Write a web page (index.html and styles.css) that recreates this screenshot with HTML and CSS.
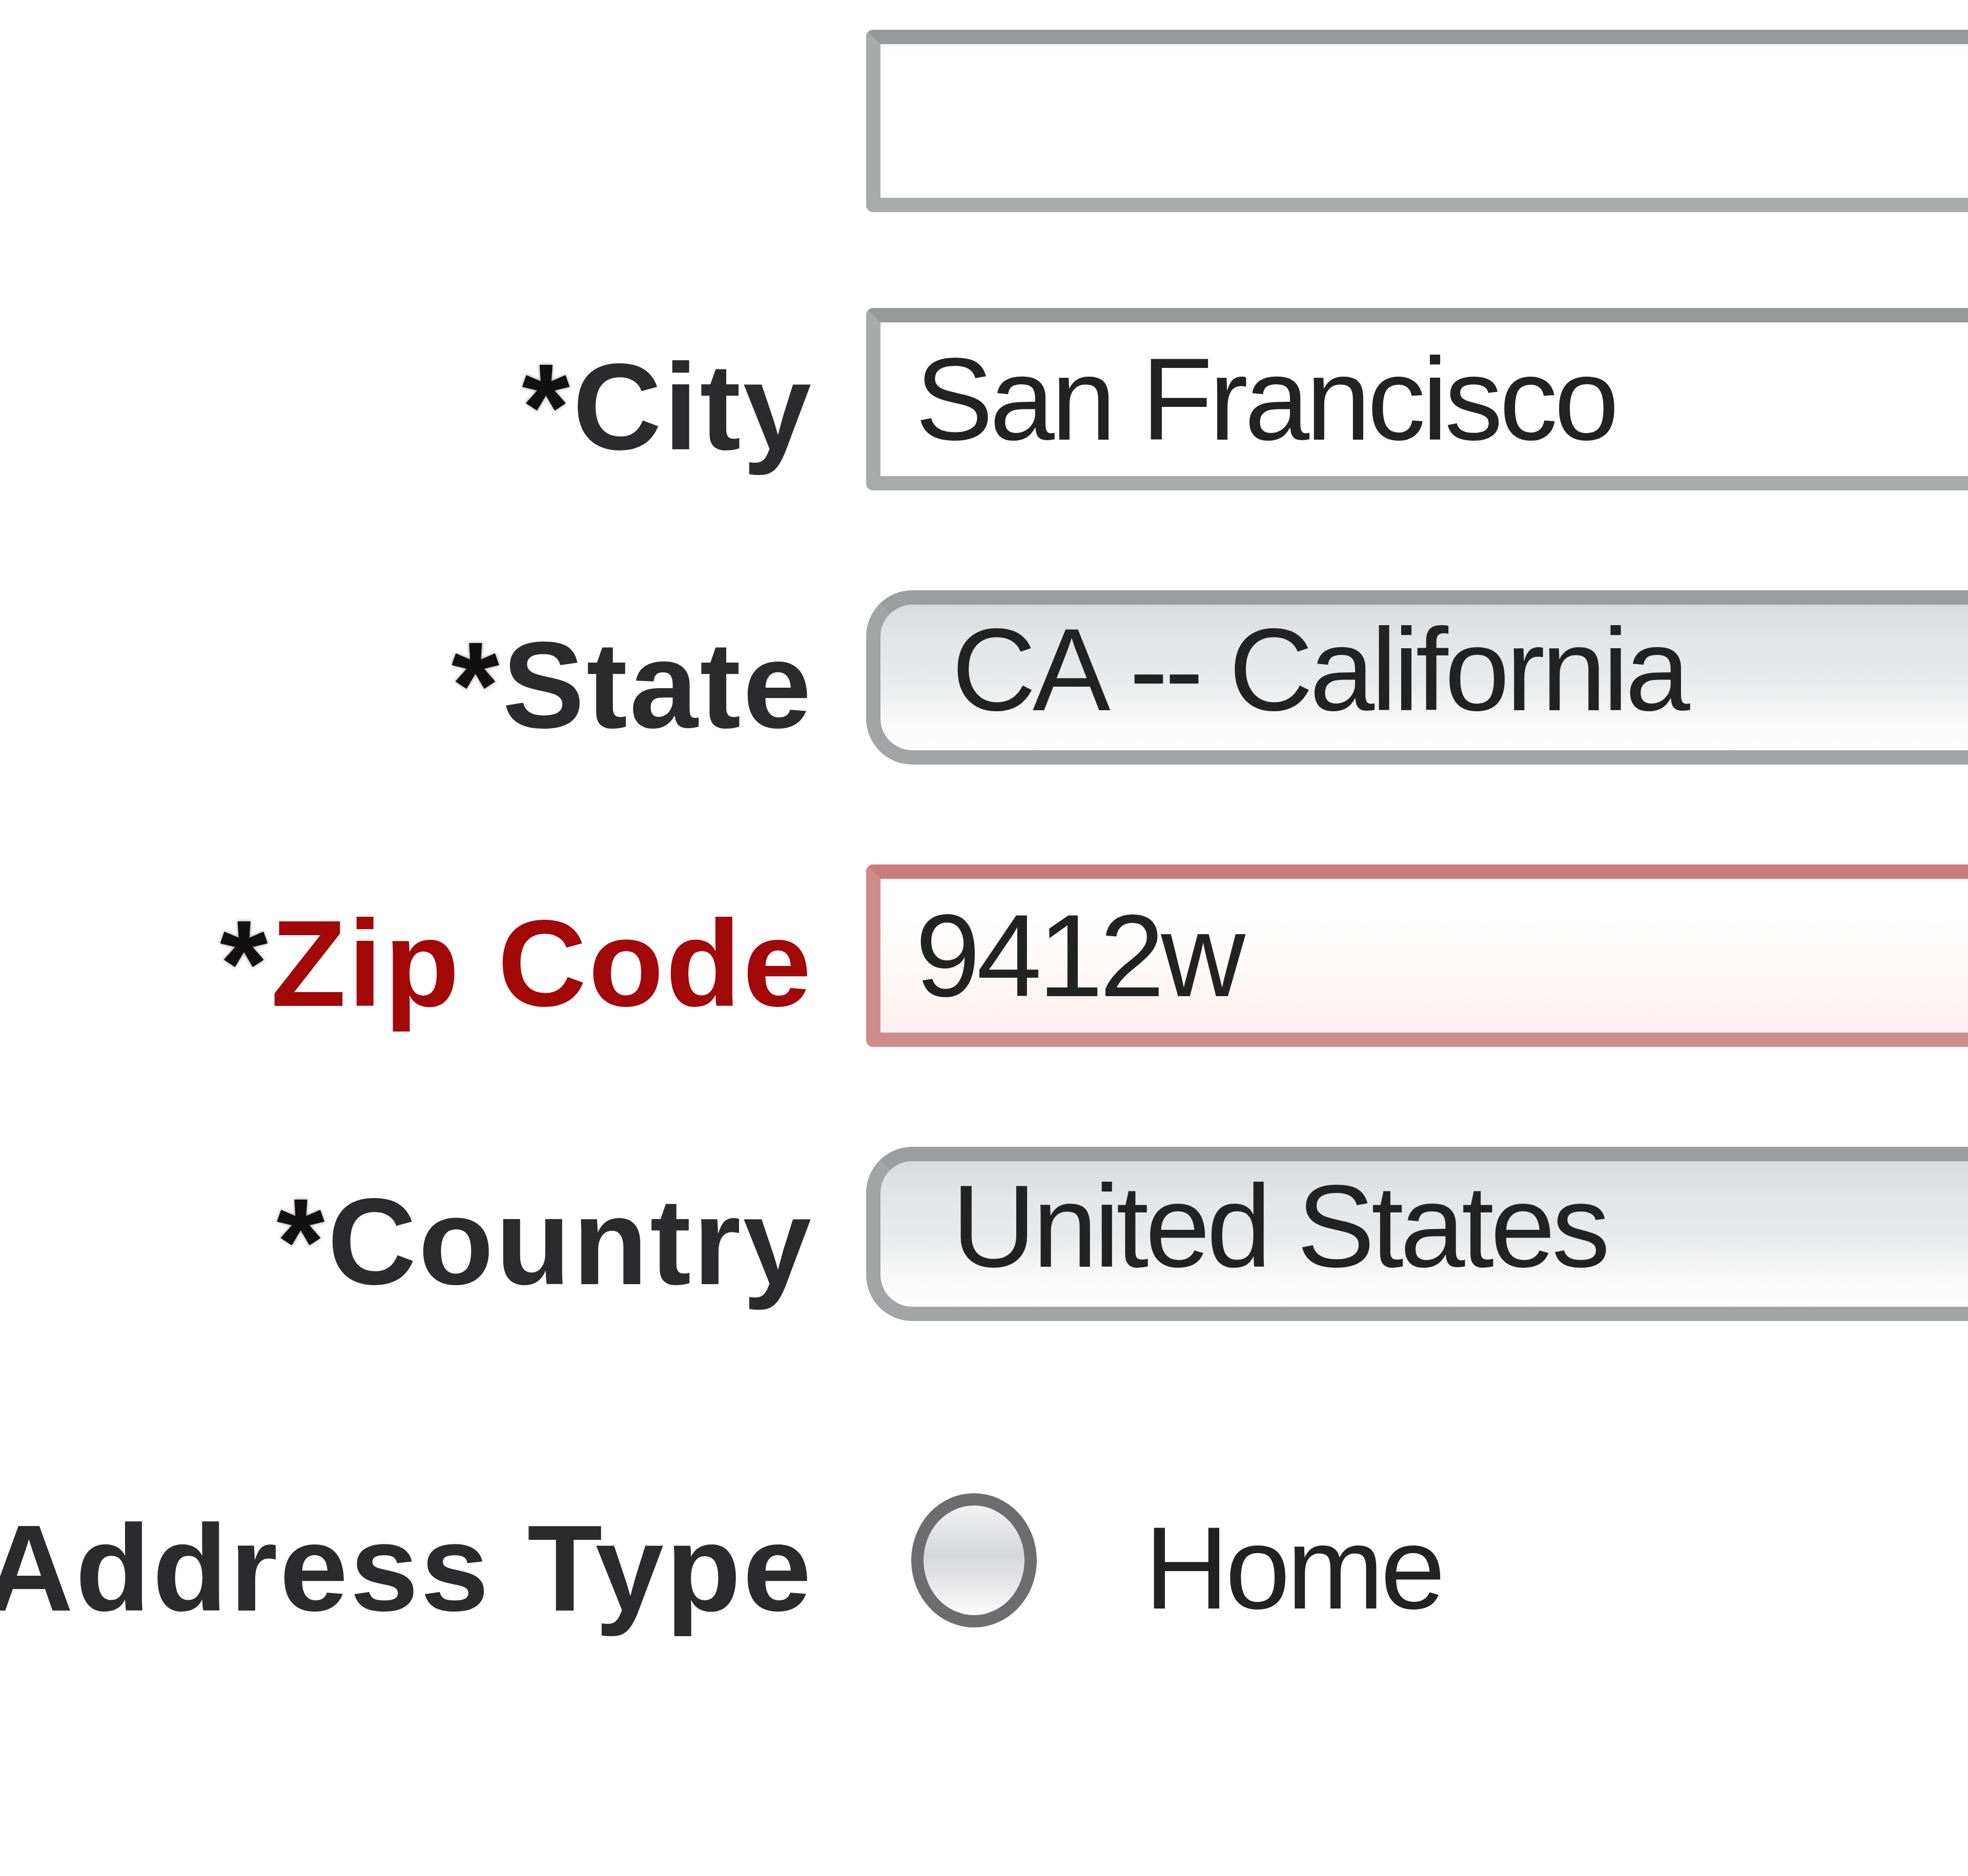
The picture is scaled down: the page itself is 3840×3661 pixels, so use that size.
FILE: index.html
```html
<!DOCTYPE html>
<html lang="en">
<head>
<meta charset="utf-8">
<title>Address form</title>
<link rel="stylesheet" href="styles.css">
</head>
<body>
<form class="form">
  <div class="label"></div>
  <div class="field"><input class="text" type="text" value=""></div>

  <div class="label"><span class="req">*</span>City</div>
  <div class="field"><input class="text" type="text" value="San Francisco"></div>

  <div class="label"><span class="req">*</span>State</div>
  <div class="field"><select class="popup"><option>CA -- California</option></select></div>

  <div class="label error"><span class="req">*</span>Zip Code</div>
  <div class="field"><input class="text text-error" type="text" value="9412w"></div>

  <div class="label"><span class="req">*</span>Country</div>
  <div class="field"><select class="popup"><option>United States</option></select></div>

  <div class="label label-radio">Address Type</div>
  <div class="field field-radio">
    <span class="radio"></span>
    <span class="radio-text">Home</span>
  </div>
</form>
</body>
</html>
```

FILE: styles.css
```css
html, body {
  margin: 0;
  padding: 0;
  background: #ffffff;
  overflow: hidden;
}

body {
  width: 3840px;
  height: 3661px;
}

.form {
  display: grid;
  grid-template-columns: 1587px 2400px;
  column-gap: 103px;
  row-gap: 187px;
  padding-top: 58px;
  align-items: center;
}

.label {
  display: flex;
  justify-content: flex-end;
  align-items: center;
  white-space: nowrap;
  font-family: "Liberation Sans", Arial, sans-serif;
  font-weight: bold;
  font-size: 240px;
  letter-spacing: 4px;
  color: #2b2b2e;
  line-height: 1;
  padding-top: 30px;
}

.label.error {
  color: #a30808;
}

.req {
  color: #111111;
  margin-right: 2px;
  text-shadow: 0 0 6px rgba(40, 0, 0, 0.5);
}

.field {
  display: flex;
  align-items: center;
  height: 356px;
}

.text,
.popup {
  -webkit-appearance: none;
  appearance: none;
  box-sizing: border-box;
  width: 2400px;
  margin: 0;
  font-family: "Liberation Sans", Arial, sans-serif;
  font-size: 228px;
  letter-spacing: -7px;
  color: #222222;
  outline: none;
}

.text {
  height: 356px;
  padding: 0 0 0 68px;
  border: 28px solid #a9aaac;
  border-top-color: #97989a;
  border-radius: 14px 0 0 14px;
  background: #ffffff;
  box-shadow: inset 0 12px 10px -8px rgba(0, 0, 0, 0.06);
}

.text-error {
  border-color: #cf8c8c;
  border-top-color: #c97b7b;
  background: linear-gradient(to bottom, #ffffff 25%, #fdf0f0 100%);
}

.popup {
  height: 340px;
  padding: 0 0 40px 139px;
  border: 28px solid #a3a4a6;
  border-top-color: #9c9d9f;
  border-radius: 90px 0 0 90px;
  background: linear-gradient(to bottom, #d9dadc 0%, #e4e5e7 25%, #eaebec 55%, #f8f8f8 78%, #ffffff 100%);
}

.label-radio {
  margin-top: 94px;
}

.field-radio {
  margin-top: 94px;
  padding-left: 88px;
}

.radio {
  display: block;
  box-sizing: border-box;
  width: 245px;
  height: 262px;
  border: 24px solid #6d6d6f;
  border-radius: 50%;
  background: linear-gradient(to bottom, #f2f2f2 0%, #d6d7d9 45%, #e6e6e8 70%, #fcfcfc 100%);
}

.radio-text {
  margin-left: 210px;
  font-family: "Liberation Sans", Arial, sans-serif;
  font-size: 228px;
  letter-spacing: -7px;
  color: #222222;
  padding-top: 30px;
}
```
